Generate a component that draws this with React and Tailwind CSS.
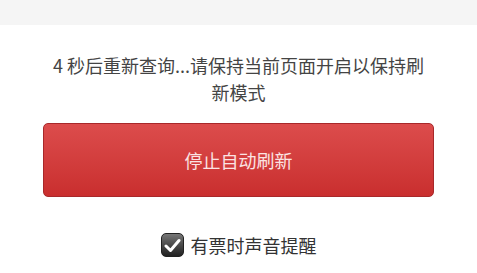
export default function App() {
  return (
    <div className="w-[477px] h-[273px] bg-white overflow-hidden" style={{ fontFamily: '"Noto Sans CJK SC", "Noto Sans", sans-serif' }}>
      <div className="h-[25px] bg-[#f5f5f5]" />
      <div className="pt-[27px] flex flex-col items-center">
        <p className="w-[382px] text-center text-[18px] leading-[27px] text-[#444]">
          4 秒后重新查询...请保持当前页面开启以保持刷新模式
        </p>
        <button className="mt-[17px] w-[391px] h-[74px] rounded-[5px] border border-[#a8282a] bg-gradient-to-b from-[#dc4c4c] to-[#c92e2e] text-[18px] text-[#fbe3e3] flex items-center justify-center">
          停止自动刷新
        </button>
        <div className="mt-[36px] flex items-center gap-[7px]">
          <div className="w-[23px] h-[24px] rounded-[5px] bg-gradient-to-b from-[#777] to-[#222] border border-[#222] flex items-center justify-center">
            <svg width="17" height="15" viewBox="0 0 17 15">
              <path d="M2 8 L6.5 12.5 L15 2.5" fill="none" stroke="white" strokeWidth="3" strokeLinecap="round" strokeLinejoin="round" />
            </svg>
          </div>
          <span className="text-[18px] leading-[24px] text-[#333]">有票时声音提醒</span>
        </div>
      </div>
    </div>
  );
}
